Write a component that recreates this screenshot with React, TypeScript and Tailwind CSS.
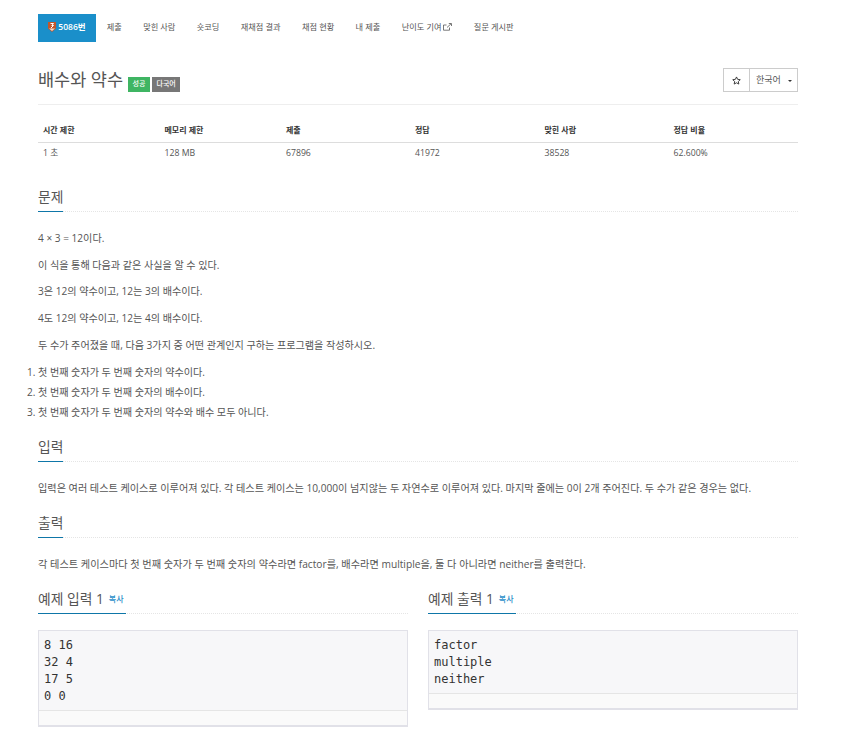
const font = '[font-family:"Open_Sans","Noto_Sans_CJK_KR",sans-serif]'

const tabs = ['제출', '맞힌 사람', '숏코딩', '재채점 결과', '채점 현황', '내 제출', '난이도 기여', '질문 게시판']

const stats = [
  { head: '시간 제한', value: '1 초', w: 'w-[121.5px]' },
  { head: '메모리 제한', value: '128 MB', w: 'w-[121.5px]' },
  { head: '제출', value: '67896', w: 'w-[129px]' },
  { head: '정답', value: '41972', w: 'w-[129.5px]' },
  { head: '맞힌 사람', value: '38528', w: 'w-[129px]' },
  { head: '정답 비율', value: '62.600%', w: 'flex-1' },
]

function Headline({ title, copy }: { title: string; copy?: boolean }) {
  return (
    <div className="flex h-[25px] border-b border-dotted border-[#e5e5e5]">
      <div className="-mb-px flex h-[25px] items-start gap-[5px] border-b border-[#0e76a8]">
        <span className="text-[13.8px] leading-[20px] text-[#555]">{title}</span>
        {copy && <span className="mt-[3px] pr-[2px] text-[8px] leading-[14px] font-medium text-[#2a8fc9]">복사</span>}
      </div>
    </div>
  )
}

function Sample({ title, lines }: { title: string; lines: string[] }) {
  return (
    <div className="w-[370px]">
      <Headline title={title} copy />
      <div className="mt-[16px] border border-b-2 border-[#e1e1e8] bg-[#f7f7f9]">
        <div className="px-[5px] pt-[6px] pb-[5px] font-['DejaVu_Sans_Mono',monospace] text-[12px] leading-[17px] text-[#333]">
          {lines.map((line) => (
            <div key={line}>{line}</div>
          ))}
        </div>
        <div className="h-[15px] border-t border-[#e5e5e5] bg-[#fafafa]" />
      </div>
    </div>
  )
}

export default function App() {
  return (
    <div className={`${font} h-[740px] overflow-hidden bg-white pt-[14px] pr-[43px] pl-[38px] text-[#555]`}>
      {/* 문제 메뉴 */}
      <div className="flex h-[28px] items-center text-[8.2px] text-[#555]">
        <div className="flex h-[28px] w-[58px] items-center justify-center gap-[2px] bg-[#1a8fca] pb-[2px] text-[8.5px] font-semibold text-white">
          <svg width="8" height="10" viewBox="0 0 8 10">
            <path d="M0 0h8v6.500L4 10 0 6.500z" fill="#c4572a" />
            <path d="M2.500 1.500h3L3.800 3.500h1.700L3 6" fill="none" stroke="#fff" strokeWidth="1" />
            <path d="M1 6.500h6L4 9z" fill="#f4d9c8" />
          </svg>
          <span>5086번</span>
        </div>
        {tabs.map((tab) => (
          <div key={tab} className="flex items-center gap-[2px] px-[10.7px] pb-[2px]">
            {tab}
            {tab === '난이도 기여' && (
              <svg width="9" height="8" viewBox="0 0 9 8" fill="none" stroke="#555" strokeWidth="0.8">
                <path d="M6.500 4.500v2.700H.5V2h3M4 4.500 8 .8M5.800.5h2.700v2.500" />
              </svg>
            )}
          </div>
        ))}
      </div>

      {/* 제목 */}
      <div className="mt-[26px] flex h-[37px] items-start justify-between border-b border-[#eee]">
        <div className="flex items-start">
          <span className="text-[17.5px] leading-[23px] text-[#555]">배수와 약수</span>
          <span className="mt-[9px] ml-[5px] flex h-[15px] items-center bg-[#3fb563] px-[4.5px] text-[7px] font-medium text-white">성공</span>
          <span className="mt-[9px] ml-[2px] flex h-[15px] items-center bg-[#777] px-[4.5px] text-[7px] font-medium text-white">다국어</span>
        </div>
        <div className="flex h-[24px] items-center border border-[#ccc] text-[9px] text-[#555]">
          <div className="flex h-full w-[26px] items-center justify-center border-r border-[#ccc]">
            <svg width="9" height="9" viewBox="0 0 24 24" fill="none" stroke="#333" strokeWidth="2.500">
              <path d="m12 2.500 3 6.400 7 .9-5.100 4.800 1.300 6.900-6.200-3.400-6.200 3.400 1.300-6.900L2 9.800l7-.9z" />
            </svg>
          </div>
          <div className="flex w-[47px] items-center justify-between pr-[5px] pl-[6px]">
            <span>한국어</span>
            <span className="mt-[1px] h-0 w-0 border-x-2 border-t-2 border-x-transparent border-t-[#333]" />
          </div>
        </div>
      </div>

      {/* 제한 표 */}
      <div className="mt-[13px]">
        <div className="flex h-[25px] items-center border-b border-[#ddd] text-[8px] font-semibold text-[#333]">
          {stats.map((s) => (
            <div key={s.head} className={`${s.w} px-[5px]`}>{s.head}</div>
          ))}
        </div>
        <div className="flex h-[22px] items-center text-[8.7px] text-[#555]">
          {stats.map((s) => (
            <div key={s.head} className={`${s.w} px-[5px]`}>{s.value}</div>
          ))}
        </div>
      </div>

      <div className="mt-[22px]">
        <Headline title="문제" />
        <div className="mt-[18px] flex flex-col gap-[10.7px] text-[10.1px] leading-[16px]">
          <p>4 × 3 = 12이다.</p>
          <p>이 식을 통해 다음과 같은 사실을 알 수 있다.</p>
          <p>3은 12의 약수이고, 12는 3의 배수이다.</p>
          <p>4도 12의 약수이고, 12는 4의 배수이다.</p>
          <p>두 수가 주어졌을 때, 다음 3가지 중 어떤 관계인지 구하는 프로그램을 작성하시오.</p>
        </div>
        <ol className="mt-[9px] list-decimal text-[10.1px] leading-[20.3px]">
          <li>첫 번째 숫자가 두 번째 숫자의 약수이다.</li>
          <li>첫 번째 숫자가 두 번째 숫자의 배수이다.</li>
          <li>첫 번째 숫자가 두 번째 숫자의 약수와 배수 모두 아니다.</li>
        </ol>
      </div>

      <div className="mt-[14px]">
        <Headline title="입력" />
        <p className="mt-[18px] text-[10.15px] leading-[16px]">
          입력은 여러 테스트 케이스로 이루어져 있다. 각 테스트 케이스는 10,000이 넘지않는 두 자연수로 이루어져 있다. 마지막 줄에는 0이 2개 주어진다. 두 수가 같은 경우는 없다.
        </p>
      </div>

      <div className="mt-[17px]">
        <Headline title="출력" />
        <p className="mt-[18px] text-[10.2px] leading-[16px]">
          각 테스트 케이스마다 첫 번째 숫자가 두 번째 숫자의 약수라면 factor를, 배수라면 multiple을, 둘 다 아니라면 neither를 출력한다.
        </p>
      </div>

      <div className="mt-[17px] flex items-start gap-[20px]">
        <Sample title="예제 입력 1" lines={['8 16', '32 4', '17 5', '0 0']} />
        <Sample title="예제 출력 1" lines={['factor', 'multiple', 'neither']} />
      </div>
    </div>
  )
}
